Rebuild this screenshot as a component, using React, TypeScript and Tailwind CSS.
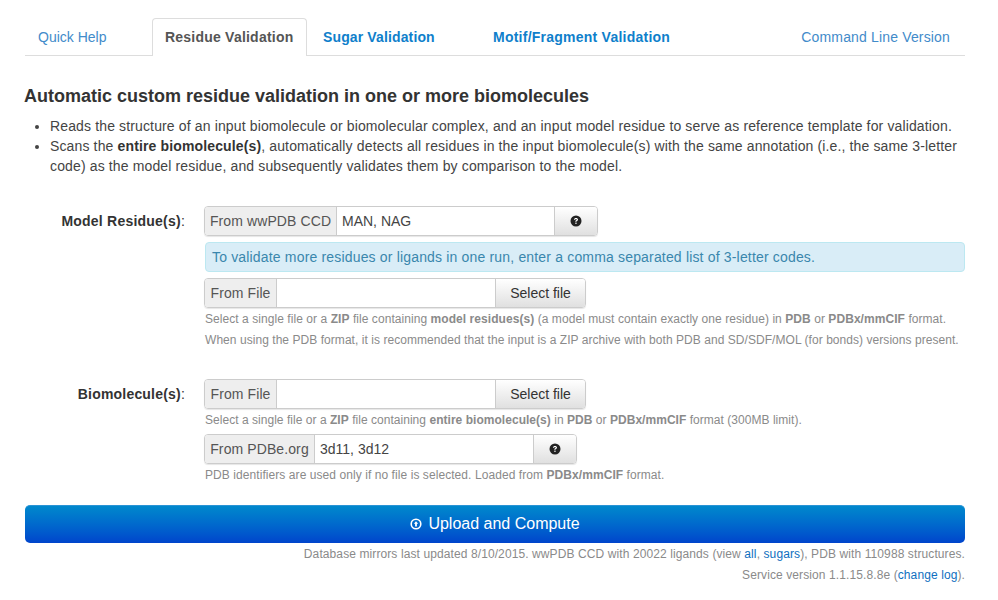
import React from 'react';

function HelpIcon() {
  return (
    <svg width="12" height="12" viewBox="0 0 12 12" className="block">
      <circle cx="6" cy="6" r="5.5" fill="#222" />
      <path d="M4 4.7C4 3.5 4.9 3 6 3s2 .6 2 1.6c0 .8-.5 1.1-1 1.4-.4.2-.5.4-.5.8H5.3c0-.8.2-1.2.8-1.5.4-.3.7-.4.7-.7 0-.3-.3-.5-.8-.5-.5 0-.8.2-.9.7H4z" fill="#fff" />
      <rect x="5.3" y="7.6" width="1.3" height="1.3" fill="#fff" />
    </svg>
  );
}

function UploadIcon() {
  return (
    <svg width="12" height="12" viewBox="0 0 12 12" className="block">
      <circle cx="6" cy="6" r="4.8" fill="none" stroke="#fff" strokeWidth="1.6" />
      <path d="M6 3.2 8.2 5.8H6.9V8.6H5.1V5.8H3.8z" fill="#fff" />
    </svg>
  );
}

function Addon({ children, w }: { children: React.ReactNode; w: string }) {
  return (
    <span className={`flex h-full items-center justify-center border-r border-[#ccc] bg-[#eeeeee] tracking-[0.1px] text-[#555] ${w}`}>
      {children}
    </span>
  );
}

function SideButton({ children, w }: { children: React.ReactNode; w: string }) {
  return (
    <span className={`flex h-full items-center justify-center border-l border-[#ccc] bg-gradient-to-b from-white to-[#e0e0e0] text-[#333] ${w}`}>
      {children}
    </span>
  );
}

function Group({ children, w }: { children: React.ReactNode; w: string }) {
  return (
    <div className={`flex h-[30px] items-center overflow-hidden rounded-[4px] border border-[#ccc] text-[14px] shadow-[0_1px_1px_rgba(0,0,0,0.1)] ${w}`}>
      {children}
    </div>
  );
}

function Hint({ children, className = '' }: { children: React.ReactNode; className?: string }) {
  return <p className={`ml-[1px] text-[12px] leading-[17px] text-[#8a8a8a] ${className}`}>{children}</p>;
}

export default function App() {
  return (
    <div className="h-[600px] w-[998px] overflow-hidden bg-white pt-[18px] pl-[25px] pr-[33px] font-['Liberation_Sans',Arial,sans-serif] text-[14px] text-[#333]">
      {/* Tabs */}
      <div className="flex h-[38px] items-stretch border-b border-[#ddd] text-[14px] leading-[20px]">
        <a className="w-[127px] pl-[13px] pt-[9px] text-[#428bca]">Quick Help</a>
        <a className="relative h-[38px] w-[155px] rounded-t-[4px] border border-b-0 border-[#ddd] bg-white pl-[12px] pt-[8px] font-bold tracking-[0.22px] text-[#555]">
          Residue Validation
        </a>
        <a className="w-[170px] pl-[16px] pt-[9px] font-bold tracking-[0.13px] text-[#0f7fcb]">Sugar Validation</a>
        <a className="pl-[16px] pt-[9px] font-bold tracking-[0.24px] text-[#0f7fcb]">Motif/Fragment Validation</a>
        <a className="ml-auto pr-[15px] pt-[9px] tracking-[0.16px] text-[#428bca]">Command Line Version</a>
      </div>

      <h1 className="-ml-[1px] mt-[28px] text-[18px] font-bold leading-[24px] text-[#333]">
        Automatic custom residue validation in one or more biomolecules
      </h1>

      <ul className="mt-[8px] list-disc pl-[25px] text-[14px] leading-[20px] tracking-[0.137px] text-[#444]">
        <li>Reads the structure of an input biomolecule or biomolecular complex, and an input model residue to serve as reference template for validation.</li>
        <li>
          Scans the <b className="text-[#333]">entire biomolecule(s)</b>, automatically detects all residues in the input biomolecule(s) with the same annotation (i.e., the same 3-letter code) as the model residue, and subsequently validates them by comparison to the model.
        </li>
      </ul>

      {/* Model residues */}
      <div className="mt-[30px] flex">
        <div className="w-[179px] shrink-0 pr-[19px] pt-[5px] text-right leading-[20px] tracking-[0.22px] whitespace-nowrap">
          <b>Model Residue(s)</b>:
        </div>
        <div className="min-w-0 flex-1">
          <Group w="w-[394px]">
            <Addon w="w-[132px]">From wwPDB CCD</Addon>
            <span className="flex-1 pl-[5px] text-[#444]">MAN, NAG</span>
            <SideButton w="w-[43px]"><HelpIcon /></SideButton>
          </Group>
          <div className="ml-[1px] mt-[6px] flex h-[30px] items-center rounded-[4px] border border-[#bce8f1] bg-[#d9edf7] pl-[6px] text-[14px] tracking-[0.17px] text-[#3a87ad]">
            To validate more residues or ligands in one run, enter a comma separated list of 3-letter codes.
          </div>
          <div className="mt-[6px]">
            <Group w="w-[382px]">
              <Addon w="w-[72px]">From File</Addon>
              <span className="flex-1" />
              <SideButton w="w-[90px]">Select file</SideButton>
            </Group>
          </div>
          <Hint className="mt-[3px] tracking-[0.06px]">
            Select a single file or a <b>ZIP</b> file containing <b>model residues(s)</b> (a model must contain exactly one residue) in <b>PDB</b> or <b>PDBx/mmCIF</b> format.
          </Hint>
          <Hint className="mt-[4px] tracking-[0.05px]">
            When using the PDB format, it is recommended that the input is a ZIP archive with both PDB and SD/SDF/MOL (for bonds) versions present.
          </Hint>
        </div>
      </div>

      {/* Biomolecules */}
      <div className="mt-[30px] flex">
        <div className="w-[179px] shrink-0 pr-[19px] pt-[5px] text-right leading-[20px] tracking-[0.2px] whitespace-nowrap">
          <b>Biomolecule(s)</b>:
        </div>
        <div className="min-w-0 flex-1">
          <Group w="w-[382px]">
            <Addon w="w-[72px]">From File</Addon>
            <span className="flex-1" />
            <SideButton w="w-[90px]">Select file</SideButton>
          </Group>
          <Hint className="mt-[3px] tracking-[0.035px]">
            Select a single file or a <b>ZIP</b> file containing <b>entire biomolecule(s)</b> in <b>PDB</b> or <b>PDBx/mmCIF</b> format (300MB limit).
          </Hint>
          <div className="mt-[5px]">
            <Group w="w-[373px]">
              <Addon w="w-[110px]">From PDBe.org</Addon>
              <span className="flex-1 pl-[5px] text-[#444]">3d11, 3d12</span>
              <SideButton w="w-[43px]"><HelpIcon /></SideButton>
            </Group>
          </div>
          <Hint className="mt-[3px] tracking-[0.07px]">
            PDB identifiers are used only if no file is selected. Loaded from <b>PDBx/mmCIF</b> format.
          </Hint>
        </div>
      </div>

      {/* Submit */}
      <button className="mt-[21px] flex h-[38px] w-full items-center justify-center gap-[6px] rounded-[5px] border-t border-[#2a93d5] bg-gradient-to-b from-[#0088cc] to-[#0044cc] pb-[2px] text-[16px] text-white">
        <UploadIcon />
        Upload and Compute
      </button>

      <div className="mt-[1px] text-right text-[12px] leading-[21px] tracking-[0.1px] text-[#8a8a8a]">
        <p>
          Database mirrors last updated 8/10/2015. wwPDB CCD with 20022 ligands (view <a className="text-[#0f6fc0]">all</a>, <a className="text-[#0f6fc0]">sugars</a>), PDB with 110988 structures.
        </p>
        <p>
          Service version 1.1.15.8.8e (<a className="text-[#0f6fc0]">change log</a>).
        </p>
      </div>
    </div>
  );
}
